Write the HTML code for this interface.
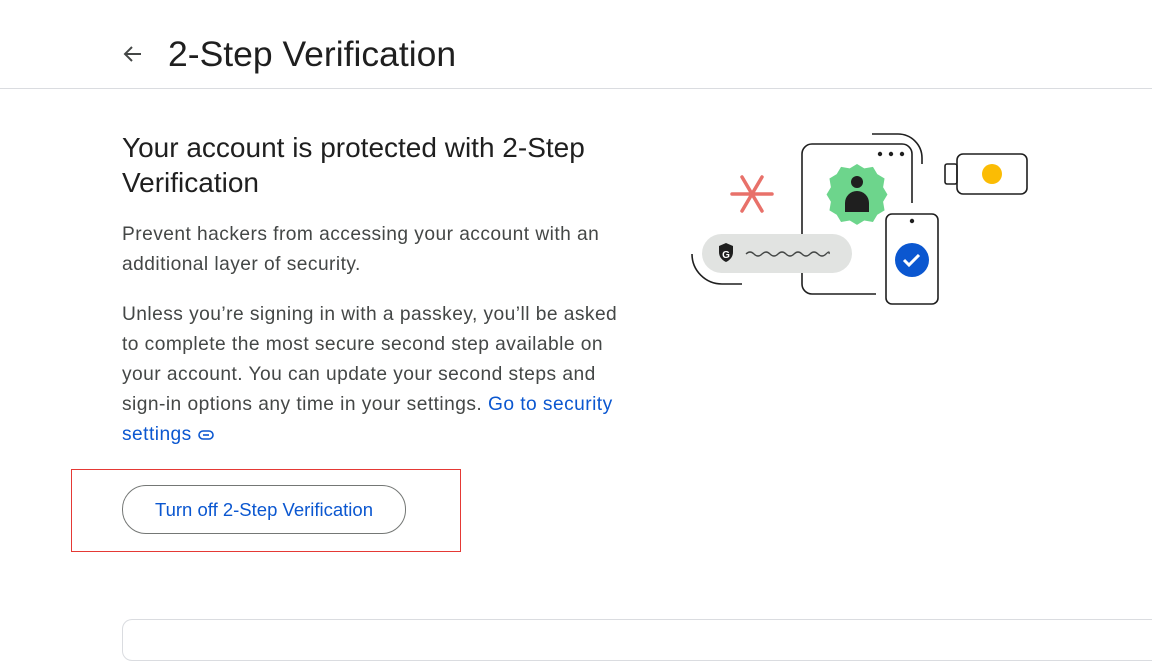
<!DOCTYPE html>
<html><head><meta charset="utf-8"><style>
body{margin:0;width:1152px;height:626px;overflow:hidden;background:#fff;font-family:"Liberation Sans",sans-serif;color:#1f1f1f;position:relative}
.hdr{position:absolute;left:0;top:0;width:1152px;height:88px;border-bottom:1px solid #dadce0}
.title{position:absolute;left:168px;top:33px;font-size:35.5px;line-height:42px;color:#1f1f1f}
h2{position:absolute;left:122px;top:130px;margin:0;font-weight:400;font-size:28px;line-height:35px;width:530px}
p{position:absolute;left:122px;margin:0;font-size:19.2px;line-height:30px;color:#444746;width:500px;white-space:nowrap;letter-spacing:0.45px}
a{color:#0b57d0;text-decoration:none}
.redbox{position:absolute;left:71px;top:469px;width:388px;height:81px;border:1px solid #e53935}
.btn{position:absolute;left:122px;top:485px;width:282px;height:47px;border:1px solid #747775;border-radius:24px;color:#0b57d0;font-size:18.5px;line-height:47px;text-align:center}
.card{position:absolute;left:122px;top:619px;width:1100px;height:40px;border:1px solid #dadce0;border-radius:10px}
</style></head><body>
<div class="hdr"></div>
<svg style="position:absolute;left:121px;top:42px" width="24" height="24" viewBox="0 0 24 24"><path d="M20 12H5M11 5l-7 7 7 7" fill="none" stroke="#444746" stroke-width="2"/></svg>
<div class="title">2-Step Verification</div>
<h2>Your account is protected with 2-Step Verification</h2>
<p style="top:220px">Prevent hackers from accessing your account with an<br>additional layer of security.</p>
<p style="top:300px">Unless you’re signing in with a passkey, you’ll be asked<br>to complete the most secure second step available on<br>your account. You can update your second steps and<br>sign-in options any time in your settings. <a>Go to security</a><br><a>settings</a> <svg width="16" height="10" viewBox="0 0 16 10"><rect x="1" y="1" width="14" height="8" rx="4" fill="none" stroke="#0b57d0" stroke-width="1.6"/><path d="M5 5h6" stroke="#0b57d0" stroke-width="1.6"/></svg></p>
<div class="redbox"></div>
<div class="btn">Turn off 2-Step Verification</div>
<div class="card"></div>
<svg style="position:absolute;left:0;top:0" width="1152" height="626">
<g fill="none" stroke="#1f1f1f" stroke-width="1.6">
<path d="M876 294H812a10 10 0 0 1-10-10V154a10 10 0 0 1 10-10h90a10 10 0 0 1 10 10v49"/>
<path d="M872 134h26a24 24 0 0 1 24 24v6"/>
<path d="M692 254a30 30 0 0 0 30 30h20"/>
<rect x="886" y="214" width="52" height="90" rx="6" fill="#fff"/>
<rect x="957" y="154" width="70" height="40" rx="6"/>
<rect x="945" y="164" width="12" height="20" rx="2"/>
</g>
<circle cx="880" cy="154" r="2.2" fill="#1f1f1f"/><circle cx="891" cy="154" r="2.2" fill="#1f1f1f"/><circle cx="902" cy="154" r="2.2" fill="#1f1f1f"/>
<g transform="translate(857,193) scale(1.45) translate(-857,-184)">
<path d="M857 163l5 3 6-1 3 5 5 3-1 6 3 5-3 5 1 6-5 3-3 5-6-1-5 3-5-3-6 1-3-5-5-3 1-6-3-5 3-5-1-6 5-3 3-5 6 1z" fill="#6dd58c" transform="translate(0,1)"/>
</g>
<circle cx="857" cy="182" r="6" fill="#1f1f1f"/>
<path d="M845 212v-9a12 12 0 0 1 24 0v9z" fill="#1f1f1f"/>
<circle cx="912" cy="221" r="2.2" fill="#1f1f1f"/>
<circle cx="912" cy="260" r="17" fill="#0b57d0"/>
<path d="M904 260l5 5 10-10" fill="none" stroke="#fff" stroke-width="3"/>
<circle cx="992" cy="174" r="10" fill="#fbbc04"/>
<g stroke="#e8716a" stroke-width="3.5" stroke-linecap="round"><path d="M732 194h40M742 177l20 34M762 177l-20 34"/></g>
<rect x="702" y="234" width="150" height="39" rx="19.5" fill="#e1e3e1"/>
<path d="M719 246l7-3 7 3v6c0 5-3 8-7 10-4-2-7-5-7-10z" fill="#1f1f1f"/>
<text x="726" y="258" font-size="10" font-weight="bold" fill="#fff" text-anchor="middle" font-family="Liberation Sans">G</text>
<path d="M746 254q4-4 8 0t8 0 8 0 8 0 8 0 8 0 8 0 8 0 8 0 8 0 3 0" fill="none" stroke="#444746" stroke-width="1.3"/>
</svg>
</body></html>
